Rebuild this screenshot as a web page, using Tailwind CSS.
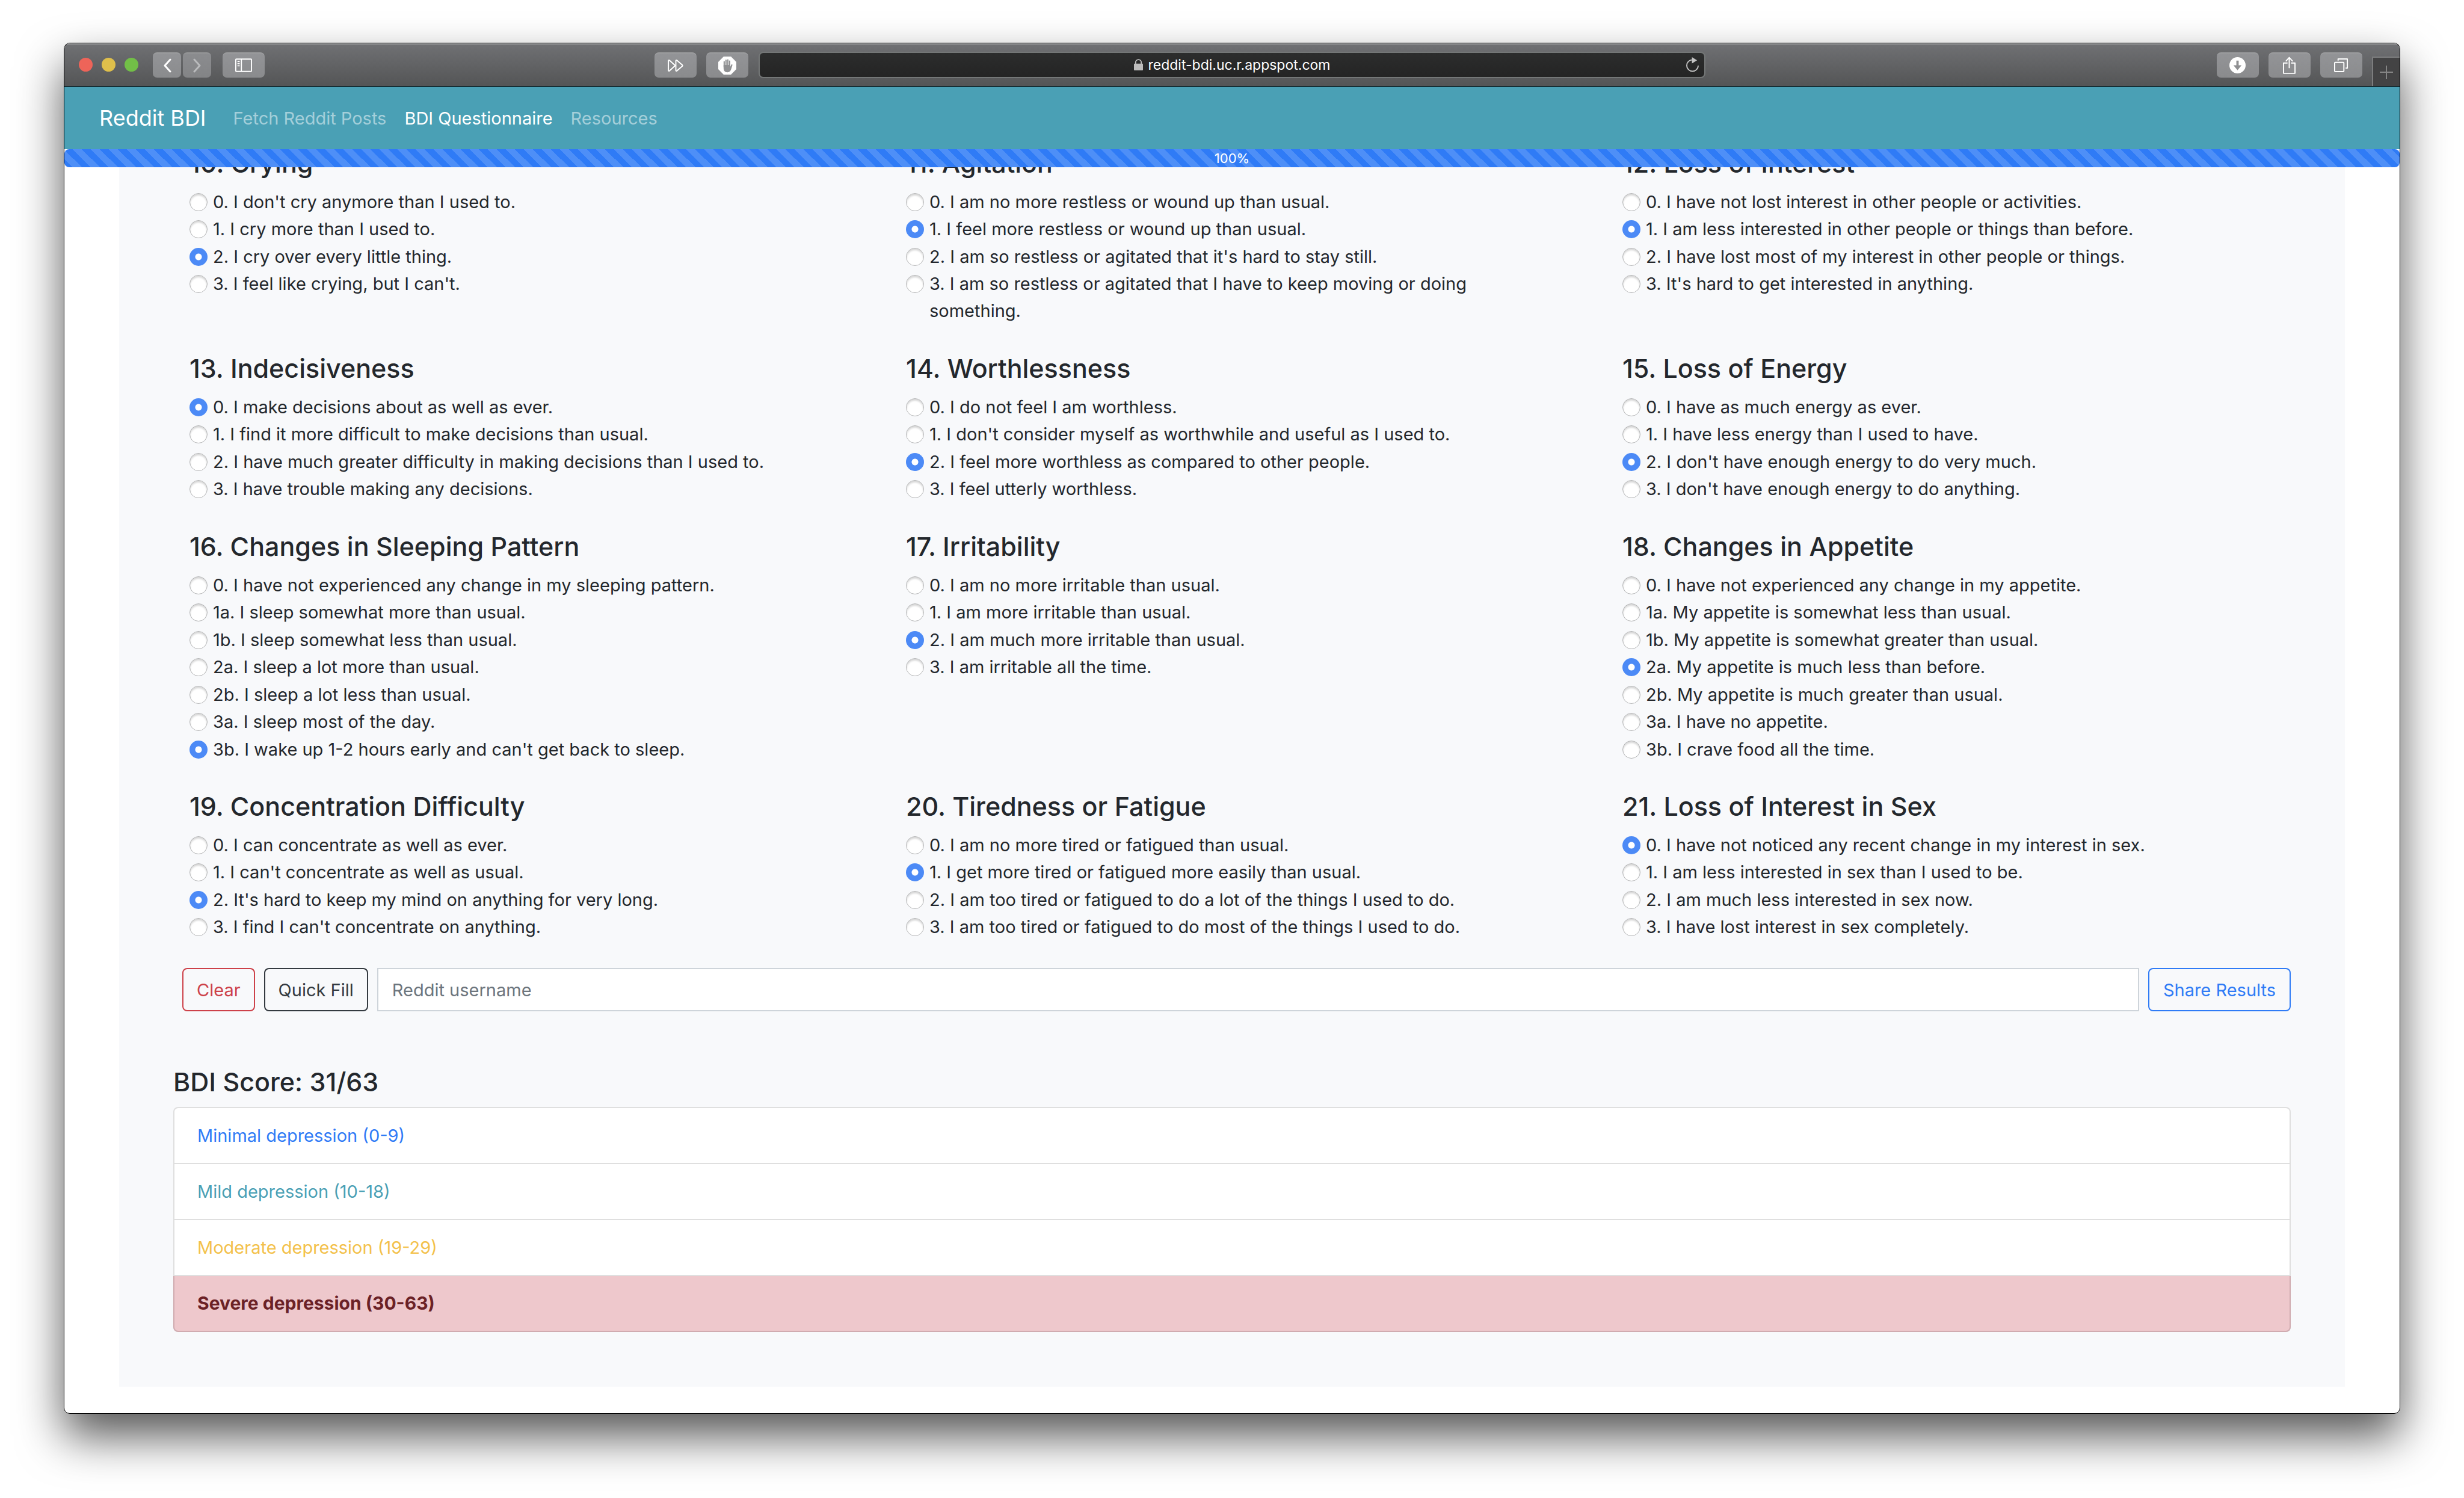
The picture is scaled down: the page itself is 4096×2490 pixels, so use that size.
<!DOCTYPE html>
<html lang="en">
<head>
<meta charset="utf-8">
<meta name="viewport" content="width=device-width, initial-scale=1">
<title>Reddit BDI</title>
<script src="https://cdn.jsdelivr.net/npm/@tailwindcss/browser@4"></script>
</head>
<body class="bg-white font-[Inter,sans-serif] text-[29px] leading-[45px] text-[#23272c]">
<div class="flex min-h-screen flex-col px-[106px] pt-[71px] pb-[140px]">
<div class="flex flex-1 flex-col rounded-[10px] shadow-[0_38px_76px_rgba(0,0,0,0.66)]">
<div class="flex flex-1 flex-col overflow-hidden rounded-[10px] border border-black bg-white">

  <!-- Browser toolbar -->
  <div class="relative z-10 grid h-[72px] grid-cols-[1154fr_1575fr_1154fr] items-center border-b border-black bg-linear-to-b from-[#707174] to-[#545556] shadow-[inset_0_2px_0_rgba(255,255,255,0.3)]">
    <div class="flex items-center pr-[17px] pl-[24px]">
      <div class="flex gap-[15px]">
        <span class="size-[23px] rounded-full bg-[#ee6459]"></span>
        <span class="size-[23px] rounded-full bg-[#dfbf4b]"></span>
        <span class="size-[23px] rounded-full bg-[#72bf47]"></span>
      </div>
      <div class="ml-[24px] flex gap-[3px]">
        <button type="button" aria-label="Back" class="flex h-[42px] w-[47px] items-center justify-center rounded-[7px] border-t-2 border-white/15 bg-linear-to-b from-[#939497] to-[#8a8b8d]">
          <svg width="14" height="24" viewBox="0 0 14 24" fill="none" stroke="#fff" stroke-width="3" stroke-linecap="round" stroke-linejoin="round"><path d="M12 2 3 12l9 10"/></svg>
        </button>
        <button type="button" aria-label="Forward" class="flex h-[42px] w-[47px] items-center justify-center rounded-[7px] border-t-2 border-white/15 bg-linear-to-b from-[#8b8c8f] to-[#838486]">
          <svg width="14" height="24" viewBox="0 0 14 24" fill="none" stroke="#b9babc" stroke-width="3" stroke-linecap="round" stroke-linejoin="round"><path d="m2 2 9 10-9 10"/></svg>
        </button>
      </div>
      <button type="button" aria-label="Show sidebar" class="ml-[19px] flex h-[42px] w-[70px] items-center justify-center rounded-[7px] border-t-2 border-white/15 bg-linear-to-b from-[#939497] to-[#8a8b8d]">
        <svg width="28" height="23" viewBox="0 0 30 24" fill="none" stroke="#fff" stroke-width="2"><rect x="1" y="1" width="28" height="22" rx="1"/><path d="M11 1v22"/><path d="M4 5h4M4 9h4M4 13h4"/></svg>
      </button>
      <button type="button" aria-label="Skip" class="ml-auto flex h-[42px] w-[70px] items-center justify-center rounded-[7px] border-t-2 border-white/15 bg-linear-to-b from-[#939497] to-[#8a8b8d]">
        <svg width="26" height="20" viewBox="0 0 27 21" fill="none" stroke="#fff" stroke-width="2" stroke-linejoin="round"><path d="M1 2.2v16.6c0 1 1 1.500 1.800.8L13 10.500 2.800 1.400C2 .7 1 1.200 1 2.200z"/><path d="M14 2.200v16.600c0 1 1 1.500 1.800.8L25.500 11.200a1 1 0 0 0 0-1.400L15.800 1.400C15 .7 14 1.200 14 2.200z"/></svg>
      </button>
      <button type="button" aria-label="Content blocker" class="ml-4 flex h-[42px] w-[70px] items-center justify-center rounded-[7px] border-t-2 border-white/15 bg-linear-to-b from-[#939497] to-[#8a8b8d]">
        <svg width="30" height="30" viewBox="0 0 32 32"><path fill="#fff" d="M9.500 0h13L32 9.500v13L22.500 32h-13L0 22.500v-13z"/><path fill="none" stroke="#8f9092" stroke-width="2.200" stroke-linecap="round" d="M10.500 18V9M13.700 16V6.500M17 16V5.800M20.200 17V8"/><path fill="#8f9092" d="M9.400 15h11.900v3l1.700-3.600c.7-1.200 2.500-.6 2.100.8l-2 6.500c-1.100 4-3.200 6.300-6.900 6.300-4.500 0-6.800-3-6.800-8z"/></svg>
      </button>
    </div>

    <div class="flex h-[44px] items-center rounded-[8px] border-2 border-[#747777] bg-linear-to-b from-[#2c2d2d] to-[#242424] pr-[9px] pl-[30px]">
      <div class="flex flex-1 items-center justify-center gap-[9px]">
        <svg width="15" height="19" viewBox="0 0 16 20"><rect x="0" y="8" width="16" height="12" rx="1" fill="#bcbcbc"/><path d="M3 9V6a5 5 0 0 1 10 0v3" fill="none" stroke="#bcbcbc" stroke-width="2"/></svg>
        <span class="text-[23px] leading-[32px] text-white">reddit-bdi.uc.r.appspot.com</span>
      </div>
      <button type="button" aria-label="Reload">
        <svg width="21" height="25" viewBox="0 0 22 26"><path d="M11 5a10 10 0 1 0 10 10" transform="translate(0 -.5)" fill="none" stroke="#c4c4c4" stroke-width="2"/><path d="M10 0v11l9-5.500z" fill="#c4c4c4"/></svg>
      </button>
    </div>

    <div class="flex h-full items-center justify-end gap-4">
      <button type="button" aria-label="Downloads" class="flex h-[42px] w-[70px] items-center justify-center rounded-[7px] border-t-2 border-white/15 bg-linear-to-b from-[#939497] to-[#8a8b8d]">
        <svg width="27" height="27" viewBox="0 0 28 28"><circle cx="14" cy="14" r="14" fill="#fff"/><path d="M12 6h4v8h5l-7 8.500L7 14h5z" fill="#8f9092"/></svg>
      </button>
      <button type="button" aria-label="Share" class="flex h-[42px] w-[70px] items-center justify-center rounded-[7px] border-t-2 border-white/15 bg-linear-to-b from-[#939497] to-[#8a8b8d]">
        <svg width="21" height="29" viewBox="0 0 22 30" fill="none" stroke="#fff" stroke-width="2" stroke-linejoin="round"><path d="M8 11H1v18h20V11h-7M11 20V2M5 8l6-6.500L17 8"/></svg>
      </button>
      <button type="button" aria-label="Show tabs" class="flex h-[42px] w-[70px] items-center justify-center rounded-[7px] border-t-2 border-white/15 bg-linear-to-b from-[#939497] to-[#8a8b8d]">
        <svg width="23" height="23" viewBox="0 0 24 24" fill="none" stroke="#fff" stroke-width="2" stroke-linejoin="round"><rect x="1" y="7" width="16" height="16" rx="1"/><path d="M7 4V1h16v16h-3"/></svg>
      </button>
      <button type="button" aria-label="New tab" class="flex h-[49px] w-[46px] items-center justify-center self-end border-t-2 border-l-2 border-[#7c7d7e] bg-[#434344]">
        <svg width="22" height="22" viewBox="0 0 22 22" stroke="#858585" stroke-width="2"><path d="M11 0v22M0 11h22"/></svg>
      </button>
    </div>
  </div>

  <!-- Site header -->
  <header class="relative z-10">
    <nav class="flex h-[104px] items-center gap-[30px] bg-[#4aa0b5] px-[58px]">
      <a href="#" class="mr-[15px] text-[36px] leading-[54px] text-white">Reddit BDI</a>
      <a href="#" class="text-white/50">Fetch Reddit Posts</a>
      <a href="#" class="text-white" aria-current="page">BDI Questionnaire</a>
      <a href="#" class="text-white/50">Resources</a>
    </nav>
    <div role="progressbar" aria-label="Progress" aria-valuenow="100" aria-valuemin="0" aria-valuemax="100" class="h-[30px] rounded-[8px] bg-[#2f7bf6] bg-[linear-gradient(45deg,rgba(255,255,255,0.15)_25%,transparent_25%,transparent_50%,rgba(255,255,255,0.15)_50%,rgba(255,255,255,0.15)_75%,transparent_75%)] bg-[length:30px_30px] bg-[position:14px_0px] text-center text-[22px] leading-[30px] text-white">100%</div>
  </header>

  <!-- Questionnaire -->
  <main class="mx-[91px] -mt-[34px] bg-[#f8f9fb] px-[90px] pb-[91px]">
    <form>
      <div class="-mr-0 ml-[27px] grid grid-cols-3 gap-x-20 [&_h4]:mb-[14px] [&_h4]:text-[43px] [&_h4]:leading-[55px] [&_h4]:font-medium [&_input]:mt-[8px] [&_input]:size-[30px] [&_input]:flex-none [&_input]:appearance-none [&_input]:rounded-full [&_input]:border [&_input]:border-[#b4b5b6] [&_input]:bg-white [&_input]:shadow-[inset_0_3px_3px_rgba(0,0,0,0.16)] [&_input:checked]:border-0 [&_input:checked]:bg-[#4c8af6] [&_input:checked]:bg-[radial-gradient(circle,#fff_5px,#4c8af6_6px)] [&_input:checked]:shadow-none [&_label]:flex [&_label]:gap-[9px] [&_label]:pr-10 [&_li:nth-child(even)]:pb-px [&_section]:pb-[45px]">
        <section>
          <h4>10. Crying</h4>
          <ul>
            <li><label><input type="radio" name="q10">0. I don't cry anymore than I used to.</label></li>
            <li><label><input type="radio" name="q10">1. I cry more than I used to.</label></li>
            <li><label><input type="radio" name="q10" checked>2. I cry over every little thing.</label></li>
            <li><label><input type="radio" name="q10">3. I feel like crying, but I can't.</label></li>
          </ul>
        </section>
        <section>
          <h4>11. Agitation</h4>
          <ul>
            <li><label><input type="radio" name="q11">0. I am no more restless or wound up than usual.</label></li>
            <li><label><input type="radio" name="q11" checked>1. I feel more restless or wound up than usual.</label></li>
            <li><label><input type="radio" name="q11">2. I am so restless or agitated that it's hard to stay still.</label></li>
            <li><label><input type="radio" name="q11">3. I am so restless or agitated that I have to keep moving or doing something.</label></li>
          </ul>
        </section>
        <section>
          <h4>12. Loss of Interest</h4>
          <ul>
            <li><label><input type="radio" name="q12">0. I have not lost interest in other people or activities.</label></li>
            <li><label><input type="radio" name="q12" checked>1. I am less interested in other people or things than before.</label></li>
            <li><label><input type="radio" name="q12">2. I have lost most of my interest in other people or things.</label></li>
            <li><label><input type="radio" name="q12">3. It's hard to get interested in anything.</label></li>
          </ul>
        </section>
        <section>
          <h4>13. Indecisiveness</h4>
          <ul>
            <li><label><input type="radio" name="q13" checked>0. I make decisions about as well as ever.</label></li>
            <li><label><input type="radio" name="q13">1. I find it more difficult to make decisions than usual.</label></li>
            <li><label><input type="radio" name="q13">2. I have much greater difficulty in making decisions than I used to.</label></li>
            <li><label><input type="radio" name="q13">3. I have trouble making any decisions.</label></li>
          </ul>
        </section>
        <section>
          <h4>14. Worthlessness</h4>
          <ul>
            <li><label><input type="radio" name="q14">0. I do not feel I am worthless.</label></li>
            <li><label><input type="radio" name="q14">1. I don't consider myself as worthwhile and useful as I used to.</label></li>
            <li><label><input type="radio" name="q14" checked>2. I feel more worthless as compared to other people.</label></li>
            <li><label><input type="radio" name="q14">3. I feel utterly worthless.</label></li>
          </ul>
        </section>
        <section>
          <h4>15. Loss of Energy</h4>
          <ul>
            <li><label><input type="radio" name="q15">0. I have as much energy as ever.</label></li>
            <li><label><input type="radio" name="q15">1. I have less energy than I used to have.</label></li>
            <li><label><input type="radio" name="q15" checked>2. I don't have enough energy to do very much.</label></li>
            <li><label><input type="radio" name="q15">3. I don't have enough energy to do anything.</label></li>
          </ul>
        </section>
        <section>
          <h4>16. Changes in Sleeping Pattern</h4>
          <ul>
            <li><label><input type="radio" name="q16">0. I have not experienced any change in my sleeping pattern.</label></li>
            <li><label><input type="radio" name="q16">1a. I sleep somewhat more than usual.</label></li>
            <li><label><input type="radio" name="q16">1b. I sleep somewhat less than usual.</label></li>
            <li><label><input type="radio" name="q16">2a. I sleep a lot more than usual.</label></li>
            <li><label><input type="radio" name="q16">2b. I sleep a lot less than usual.</label></li>
            <li><label><input type="radio" name="q16">3a. I sleep most of the day.</label></li>
            <li><label><input type="radio" name="q16" checked>3b. I wake up 1-2 hours early and can't get back to sleep.</label></li>
          </ul>
        </section>
        <section>
          <h4>17. Irritability</h4>
          <ul>
            <li><label><input type="radio" name="q17">0. I am no more irritable than usual.</label></li>
            <li><label><input type="radio" name="q17">1. I am more irritable than usual.</label></li>
            <li><label><input type="radio" name="q17" checked>2. I am much more irritable than usual.</label></li>
            <li><label><input type="radio" name="q17">3. I am irritable all the time.</label></li>
          </ul>
        </section>
        <section>
          <h4>18. Changes in Appetite</h4>
          <ul>
            <li><label><input type="radio" name="q18">0. I have not experienced any change in my appetite.</label></li>
            <li><label><input type="radio" name="q18">1a. My appetite is somewhat less than usual.</label></li>
            <li><label><input type="radio" name="q18">1b. My appetite is somewhat greater than usual.</label></li>
            <li><label><input type="radio" name="q18" checked>2a. My appetite is much less than before.</label></li>
            <li><label><input type="radio" name="q18">2b. My appetite is much greater than usual.</label></li>
            <li><label><input type="radio" name="q18">3a. I have no appetite.</label></li>
            <li><label><input type="radio" name="q18">3b. I crave food all the time.</label></li>
          </ul>
        </section>
        <section>
          <h4>19. Concentration Difficulty</h4>
          <ul>
            <li><label><input type="radio" name="q19">0. I can concentrate as well as ever.</label></li>
            <li><label><input type="radio" name="q19">1. I can't concentrate as well as usual.</label></li>
            <li><label><input type="radio" name="q19" checked>2. It's hard to keep my mind on anything for very long.</label></li>
            <li><label><input type="radio" name="q19">3. I find I can't concentrate on anything.</label></li>
          </ul>
        </section>
        <section>
          <h4>20. Tiredness or Fatigue</h4>
          <ul>
            <li><label><input type="radio" name="q20">0. I am no more tired or fatigued than usual.</label></li>
            <li><label><input type="radio" name="q20" checked>1. I get more tired or fatigued more easily than usual.</label></li>
            <li><label><input type="radio" name="q20">2. I am too tired or fatigued to do a lot of the things I used to do.</label></li>
            <li><label><input type="radio" name="q20">3. I am too tired or fatigued to do most of the things I used to do.</label></li>
          </ul>
        </section>
        <section>
          <h4>21. Loss of Interest in Sex</h4>
          <ul>
            <li><label><input type="radio" name="q21" checked>0. I have not noticed any recent change in my interest in sex.</label></li>
            <li><label><input type="radio" name="q21">1. I am less interested in sex than I used to be.</label></li>
            <li><label><input type="radio" name="q21">2. I am much less interested in sex now.</label></li>
            <li><label><input type="radio" name="q21">3. I have lost interest in sex completely.</label></li>
          </ul>
        </section>
      </div>

      <div class="ml-[15px] flex h-[72px] gap-[15px]">
        <button type="reset" class="rounded-[8px] border-2 border-[#cd4149] px-[22px] text-[#cd4149]">Clear</button>
        <button type="button" class="rounded-[8px] border-2 border-[#343a40] px-[22px] text-[#343a40]">Quick Fill</button>
        <input type="text" aria-label="Reddit username" placeholder="Reddit username" class="min-w-0 flex-1 border-2 border-[#ced4da] bg-white px-[23px] placeholder:text-[#6c757d]">
        <button type="submit" class="rounded-[8px] border-2 border-[#2f7bf6] px-[23px] text-[#2f7bf6]">Share Results</button>
      </div>
    </form>

    <h4 class="mt-[90px] mb-[14px] text-[43px] leading-[55px] font-medium">BDI Score: 31/63</h4>
    <ul class="flex flex-col rounded-[8px] border-2 border-[#dfdfdf] bg-white [&_li]:px-[38px] [&_li]:leading-[91px]">
      <li class="border-b-2 border-[#dfdfdf] text-[#2f7bf6]">Minimal depression (0-9)</li>
      <li class="border-b-2 border-[#dfdfdf] text-[#4aa0b5]">Mild depression (10-18)</li>
      <li class="border-b-2 border-[#dfdfdf] text-[#f3c14b]">Moderate depression (19-29)</li>
      <li class="-mx-0.5 -mb-0.5 rounded-b-[8px] border-2 border-t-0 border-[#d0abb0] bg-[#eec8cc] text-[30px] font-bold text-[#6b2126]">Severe depression (30-63)</li>
    </ul>
  </main>
</div>
</div>
</div>
</body>
</html>
